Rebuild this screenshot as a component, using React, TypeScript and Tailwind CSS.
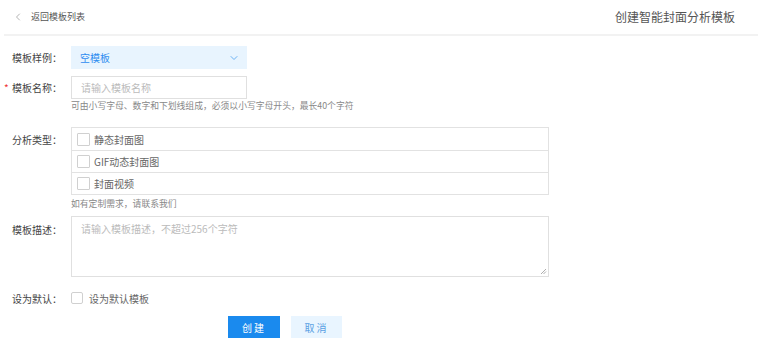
import React from 'react';
import { ChevronLeft, ChevronDown } from 'lucide-react';

const font = { fontFamily: '"Noto Sans CJK SC", "Noto Sans", sans-serif' };

function Label({ text, required }: { text: string; required?: boolean }) {
  return (
    <div className="relative w-[71px] shrink-0 pl-3 text-[10px] text-[#444]">
      {required && <span className="absolute left-[4px] top-0 text-[#e33]">*</span>}
      {text}
    </div>
  );
}

function Box() {
  return <span className="w-[13px] h-[13px] border border-[#d0d0d0] bg-white rounded-[1px] shrink-0" />;
}

export default function App() {
  const types = ['静态封面图', 'GIF动态封面图', '封面视频'];
  return (
    <div className="w-[758px] h-[354px] bg-white overflow-hidden" style={font}>
      {/* header */}
      <div className="h-[34px] flex items-center justify-between pl-3 pr-[23px]">
        <div className="flex items-center gap-[7px] text-[9px] text-[#555]">
          <ChevronLeft className="w-[12px] h-[12px] text-[#999]" strokeWidth={1.5} />
          <span>返回模板列表</span>
        </div>
        <div className="text-[12px] text-[#555] pb-[1px]">创建智能封面分析模板</div>
      </div>
      <div className="ml-1 h-[2px] bg-[#f2f2f2]" />

      <div className="pt-[10px]">
        {/* 模板样例 */}
        <div className="flex items-center h-[23px]">
          <Label text="模板样例：" />
          <div className="w-[176px] h-[23px] bg-[#e8f4fe] flex items-center justify-between pl-[9px] pr-[7px]">
            <span className="text-[10px] text-[#2d8cf0]">空模板</span>
            <ChevronDown className="w-[12px] h-[12px] text-[#4a9ff0]" strokeWidth={1.6} />
          </div>
        </div>

        {/* 模板名称 */}
        <div className="flex items-center h-[23px] mt-[7px]">
          <Label text="模板名称：" required />
          <div className="w-[176px] h-[23px] border border-[#e0e0e0] flex items-center pl-[9px] text-[10px] text-[#bbb]">
            请输入模板名称
          </div>
        </div>
        <div className="pl-[71px] mt-[1px] text-[8.8px] text-[#888] leading-[12px]">
          可由小写字母、数字和下划线组成，必须以小写字母开头，最长40个字符
        </div>

        {/* 分析类型 */}
        <div className="flex mt-[15px]">
          <div className="pt-[5px]">
            <Label text="分析类型：" />
          </div>
          <div className="w-[478px] border border-[#e2e2e2]">
            {types.map((t, i) => (
              <div
                key={t}
                className={`h-[22px] flex items-center gap-[4px] pl-[5px] text-[10px] text-[#666] ${i > 0 ? 'border-t border-[#e2e2e2]' : ''}`}
              >
                <Box />
                <span>{t}</span>
              </div>
            ))}
          </div>
        </div>
        <div className="pl-[71px] mt-[3px] text-[8.8px] text-[#888] leading-[12px]">如有定制需求，请联系我们</div>

        {/* 模板描述 */}
        <div className="flex mt-[6px]">
          <div className="pt-[6px]">
            <Label text="模板描述：" />
          </div>
          <div className="relative w-[478px] h-[61px] border border-[#e0e0e0] pl-[9px] pt-[4px] text-[10px] text-[#bbb]">
            请输入模板描述，不超过256个字符
            <svg className="absolute right-[1px] bottom-[1px]" width="7" height="7" viewBox="0 0 7 7">
              <path d="M6 1L1 6M6 3.5L3.5 6" stroke="#999" strokeWidth="0.8" />
            </svg>
          </div>
        </div>

        {/* 设为默认 */}
        <div className="flex items-center mt-[14px] h-[14px]">
          <Label text="设为默认：" />
          <div className="flex items-center gap-[6px] text-[10px] text-[#666]">
            <span className="w-[12px] h-[12px] border border-[#d0d0d0] rounded-[2px]" />
            <span>设为默认模板</span>
          </div>
        </div>

        {/* buttons */}
        <div className="flex gap-[11px] pl-[228px] mt-[11px]">
          <button className="w-[52px] h-[22px] bg-[#1a8aee] text-white text-[10px] tracking-[2px]">创建</button>
          <button className="w-[51px] h-[22px] bg-[#e9f5ff] text-[#5a9fe3] text-[10px] tracking-[2px]">取消</button>
        </div>
      </div>
    </div>
  );
}
